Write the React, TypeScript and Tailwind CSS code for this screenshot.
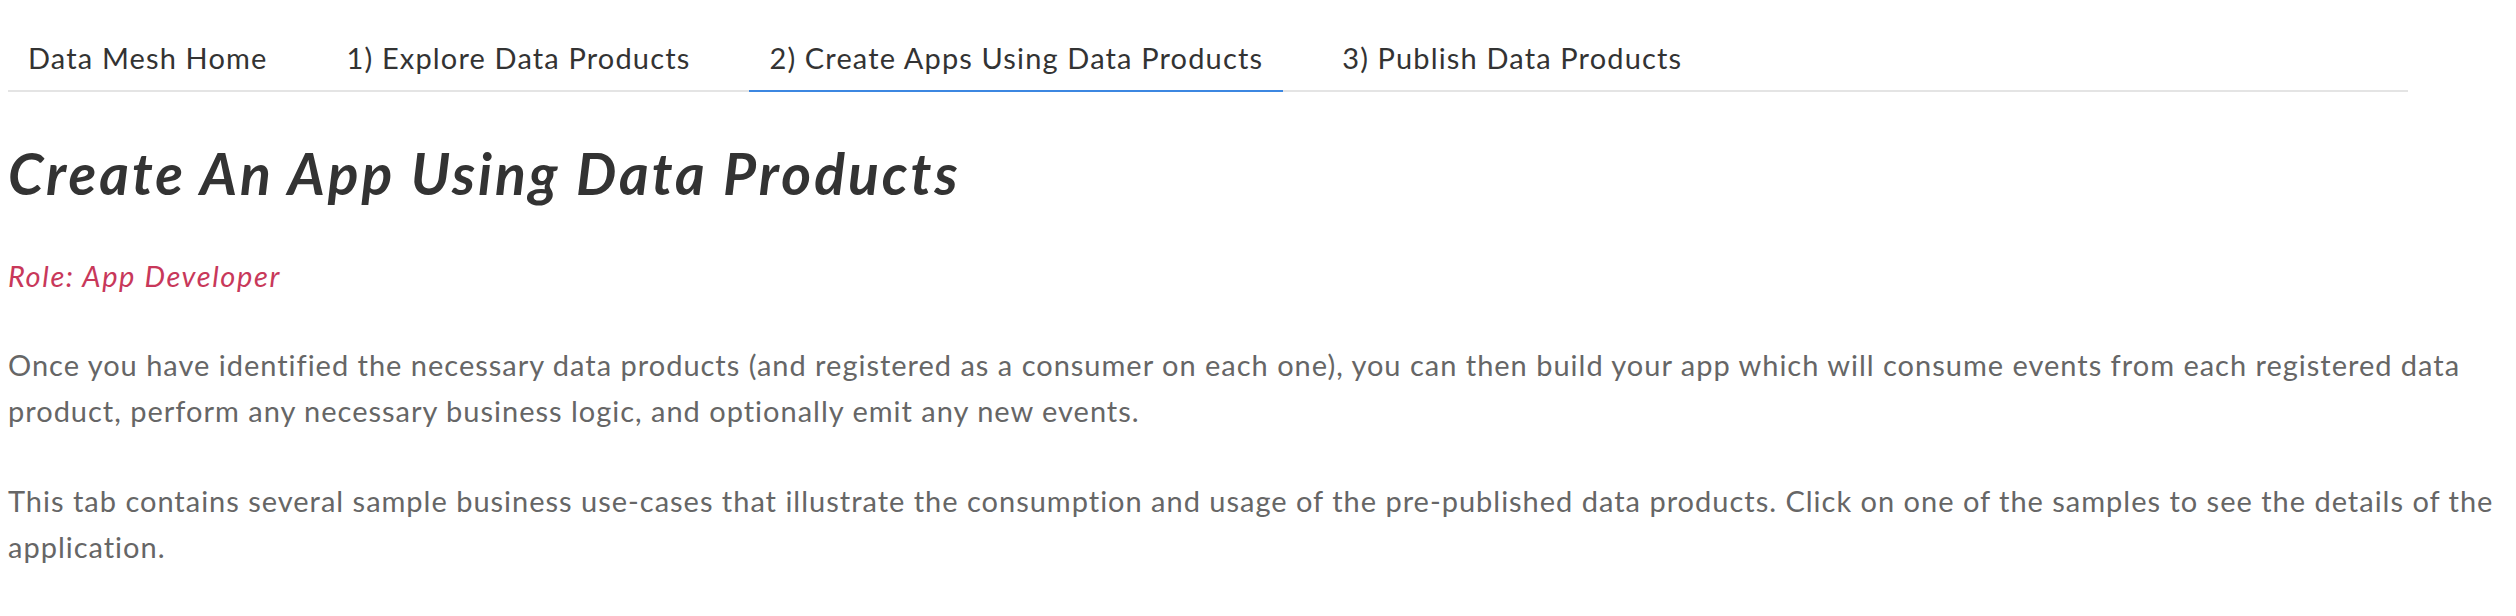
const tabs = [
  "Data Mesh Home",
  "1) Explore Data Products",
  "2) Create Apps Using Data Products",
  "3) Publish Data Products",
];

const App = () => {
  const active = 2;
  return (
    <div className="min-h-screen bg-white px-[8px] pt-[24px] font-['Lato',sans-serif]">
      <nav className="flex w-[2400px] gap-[39px] border-b-2 border-[#e4e4e4]">
        {tabs.map((t, i) => (
          <div
            key={t}
            className={
              i === active
                ? "-mb-[2px] border-b-2 border-[#3c87e1] px-[20px] pt-[12px] pb-[10px] text-[29px] leading-[44px] tracking-[1.15px] text-[#333]"
                : "-mb-[2px] border-b-2 border-transparent px-[20px] pt-[12px] pb-[10px] text-[29px] leading-[44px] tracking-[1.15px] text-[#333]"
            }
          >
            {t}
          </div>
        ))}
      </nav>

      <h1 className="mt-[47px] text-[57px] leading-[68px] font-bold italic tracking-[3px] text-[#333]">
        Create An App Using Data Products
      </h1>

      <p className="mt-[46px] text-[29px] leading-[46px] italic tracking-[1.6px] text-[#c8385a]">
        Role: App Developer
      </p>

      <p className="mt-[43px] text-[29px] leading-[46px] tracking-[0.99px] text-[#666]">
        Once you have identified the necessary data products (and registered as a consumer on each one), you can then
        build your app which will consume events from each registered data product, perform any necessary business
        logic, and optionally emit any new events.
      </p>

      <p className="mt-[44px] text-[29px] leading-[46px] tracking-[0.99px] text-[#666]">
        This tab contains several sample business use-cases that illustrate the consumption and usage of the
        pre-published data products. Click on one of the samples to see the details of the application.
      </p>
    </div>
  );
};

export default App;
